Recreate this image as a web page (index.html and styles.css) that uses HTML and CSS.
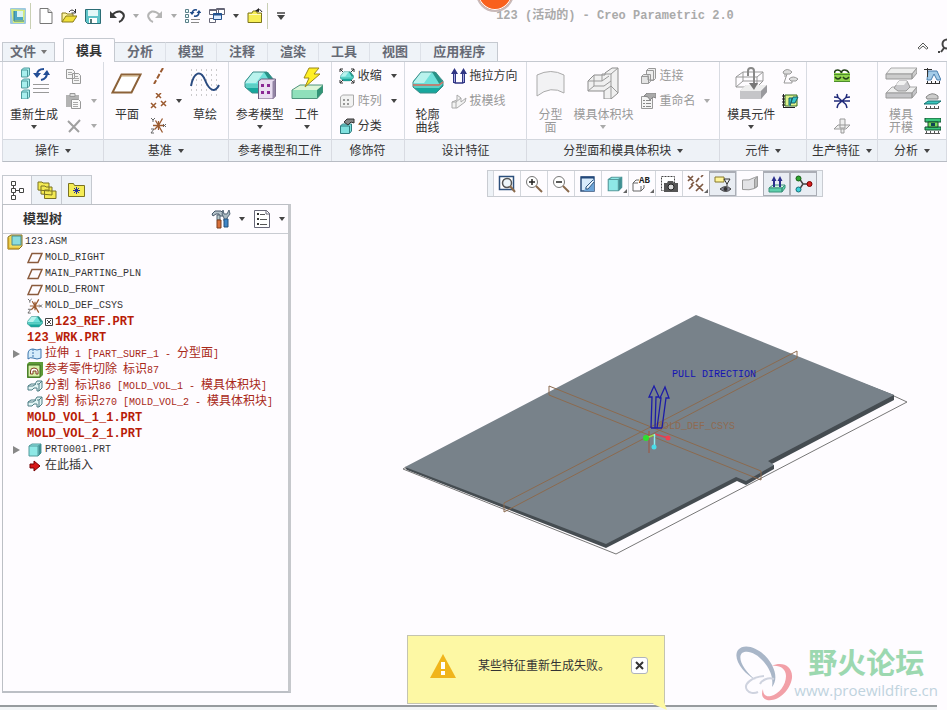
FILE: index.html
```html
<!DOCTYPE html>
<html lang="zh-CN">
  <head>
    <meta charset="UTF-8" />
    <meta name="viewport" content="width=device-width, initial-scale=1.0" />
    <title>123 (活动的) - Creo Parametric 2.0</title>
    <link rel="stylesheet" href="styles.css" />
  </head>

  <body>
    <svg class="sprite" aria-hidden="true">
      <symbol id="plane" viewBox="0 0 16 12">
        <path d="M5 1.500h10L11 10.500H1z" fill="none" stroke="#8a5a3c" stroke-width="1.500" />
      </symbol>
      <symbol id="csys" viewBox="0 0 17 17">
        <path d="M3 8.500h11M8.500 8.500l4-7M8.500 8.500l4 7M8.500 8.500l-4 4M8.500 8.500l-3-5M8.500 4v9" fill="none" stroke="#9a5a30" stroke-width="1.300" />
        <path d="M1 1l2 2 2-2M3 3v2M1 12h3l-3 4h3M13 7l3 3M16 7l-3 3" fill="none" stroke="#666" />
      </symbol>
      <symbol id="split" viewBox="0 0 16 12">
        <path d="M1 6l3-2h4l2-3h5v7l-3 3h-2V8H7L5 10H1zM1 6h5l3-2M10 4h2v7M12 4l3-3" fill="#e2f4f4" stroke="#4c7d84" />
      </symbol>
      <symbol id="mold" viewBox="0 0 32 24">
        <path d="M9 1h14l8 10-4 4H2L1 10z" fill="#6fe0da" />
        <path d="M9 1h11L12 12H1z" fill="#b9f3ee" />
        <path d="M20 1h4l7 10-3 3z" fill="#259487" />
        <path d="M1 13h26l4-3v5l-7 7H8l-7-6z" fill="#17a79d" />
        <path d="M1 13h26l4-3v3l-4 4H1z" fill="#5ccfc5" />
        <path d="M9 1h14l8 9v5l-7 7H8l-7-6v-5z" fill="none" stroke="#3d8c88" />
      </symbol>
      <symbol id="cube" viewBox="0 0 16 16">
        <path d="M2 4l3-2h9v9l-3 3H2z" fill="#8ee8e6" stroke="#559a9c" />
        <path d="M2 4h9v10M11 4l3-2" fill="none" stroke="#559a9c" />
        <path d="M11.500 4l2.500-2v9l-2.500 3z" fill="#3f8f92" />
      </symbol>
    </svg>

    <header class="titlebar">
      <div class="quick">
        <button class="icon-btn sep" aria-label="Creo">
          <svg width="16" height="16"><rect width="16" height="16" rx="1" fill="#9cc8e0" /><path d="M1 1l14 1-1 13H3z" fill="#d5ea7c" /><path d="M4 3h9v9H4z" fill="#4da6c4" /><path d="M7 3h6v6H7z" fill="#d9f3f3" /><path d="M4 3v10h10" fill="none" stroke="#2d7e96" /></svg>
        </button>
        <button class="icon-btn" aria-label="新建">
          <svg width="14" height="16"><path d="M1 .500h8l4 4v11H1z" fill="#fff" stroke="#777" /><path d="M9 .500v4h4" fill="#ddd" stroke="#777" /></svg>
        </button>
        <button class="icon-btn" aria-label="打开">
          <svg width="16" height="16"><path d="M1 14V5h4l1 1h6v3" fill="#fbf3a0" stroke="#8a7d1a" /><path d="M1 14l4-6h11l-4 6z" fill="#f0df3a" stroke="#8a7d1a" /><path d="M8 4q3-4 6 0M14.500 1v4h-4" fill="none" stroke="#333" /></svg>
        </button>
        <button class="icon-btn" aria-label="保存">
          <svg width="16" height="16"><path d="M.500 1.500h15v14h-13l-2-2z" fill="#5fc3c8" stroke="#2b6c75" /><path d="M3 2h10v6H3z" fill="#e3f8f8" /><path d="M4 10h8v5H4z" fill="#fff" /><path d="M5 11h2v4H5z" fill="#577" /></svg>
        </button>
        <button class="icon-btn" aria-label="撤消">
          <svg width="16" height="16"><path d="M3 7q4-4 8-3.500 5 2 3.500 6Q13 13 10 14" fill="none" stroke="#3a3a3a" stroke-width="2" /><path d="M1 3v7h7z" fill="#3a3a3a" /></svg>
        </button>
        <span class="caret dim"></span>
        <button class="icon-btn" aria-label="重做">
          <svg width="16" height="16"><path d="M13 7Q9 3 5 3.500 0 5.500 1.500 9.500 3 13 6 14" fill="none" stroke="#b5b5b5" stroke-width="2" /><path d="M15 3v7H8z" fill="#b5b5b5" /></svg>
        </button>
        <span class="caret dim"></span>
        <button class="icon-btn" aria-label="重新生成">
          <svg width="16" height="16"><path d="M.500 1.500h3v3h-3zM.500 6.500h3v3h-3zM.500 11.500h3v3h-3z" fill="#e8fbfb" stroke="#5a7f88" /><path d="M6 11.500h9M6 14.500h8" stroke="#888" /><path d="M7 5q1-4 5-3M14 5q-1 4-5 3" fill="none" stroke="#1f4a88" stroke-width="1.500" /><path d="M4.500 4h5L7 7zM11.500 5h5L14 2z" fill="#1f4a88" /></svg>
        </button>
        <button class="icon-btn" aria-label="窗口">
          <svg width="16" height="16"><path d="M.500 1.500h9v5h-9zM7.500.500h8v6h-8zM.500 10.500h6v4h-6z" fill="#fff" stroke="#667" /><path d="M4.500 5.500h8v6h-8z" fill="#dcecff" stroke="#23528f" /><path d="M4 6.500h9" stroke="#23528f" stroke-width="2" /><path d="M1 2.500h6M8 1.500h7" stroke="#667" /></svg>
        </button>
        <span class="caret"></span>
        <button class="icon-btn sep" aria-label="关闭">
          <svg width="16" height="16"><path d="M1 14.500V5h4l1-2h4v2h4.500v9.500z" fill="#f7ef55" stroke="#7c741d" /><path d="M2 6.500h12" stroke="#fffcc0" /><path d="M10 3q3-3 5 1" fill="none" stroke="#222" /><path d="M8 3l4-3v4z" fill="#222" /></svg>
        </button>
        <button class="icon-btn" aria-label="自定义">
          <svg width="10" height="8"><path d="M1 1h8" stroke="#444" stroke-width="1.500" /><path d="M1 3h8L5 8z" fill="#444" /></svg>
        </button>
      </div>
      <h1 class="title">123 (活动的) - Creo Parametric 2.0</h1>
      <span class="record"></span>
    </header>

    <nav class="tabs">
      <button class="tab file">文件<span class="caret"></span></button>
      <button class="tab active">模具</button>
      <button class="tab">分析</button>
      <button class="tab">模型</button>
      <button class="tab">注释</button>
      <button class="tab">渲染</button>
      <button class="tab">工具</button>
      <button class="tab">视图</button>
      <button class="tab last">应用程序</button>
      <div class="tab-tools">
        <button class="icon-btn" aria-label="最小化功能区">
          <svg width="12" height="8"><path d="M1 6l5-5 5 5-1.500 1L6 4 2.500 7z" fill="#fff" stroke="#555" /></svg>
        </button>
        <button class="icon-btn" aria-label="搜索">
          <svg width="9" height="16"><circle cx="9" cy="6" r="4.500" fill="none" stroke="#444" stroke-width="2" /><path d="M6 10l-3 4" stroke="#444" stroke-width="2" /><path d="M0 14h2" stroke="#444" stroke-width="2" /></svg>
        </button>
      </div>
    </nav>

    <div class="ribbon">
      <section class="group">
        <div class="tools">
          <button class="big">
            <svg width="32" height="32"><path d="M3.500 3l2-2h6v7l-2 2h-6zM3.500 14l2-2h6v7l-2 2h-6zM3.500 25l2-2h6v7l-2 2h-6z" fill="#a8efee" stroke="#4d9a9c" /><path d="M3.500 3h6v7M3.500 14h6v7M3.500 25h6v7" fill="none" stroke="#4d9a9c" /><path d="M15 17.500h16M15 21.500h16M15 25.500h16" stroke="#999" /><path d="M19 8q0-6 7-6M29 6q0 6-6 7" fill="none" stroke="#234e96" stroke-width="2" /><path d="M15 6h8l-4 5zM25 8h7l-3-5z" fill="#234e96" /></svg>
            <span>重新生成</span><span class="caret"></span>
          </button>
          <div class="stack">
            <button class="small" aria-label="复制" disabled><svg width="17" height="16"><path d="M1.500 1.500h6l2 2v7h-8zM7.500 5.500h6l2 2v8h-8z" fill="#f5f5f5" stroke="#999" /><path d="M3 4.500h4M3 6.500h4M9 8.500h4M9 10.500h5M9 12.500h5" stroke="#aaa" /></svg></button>
            <button class="small" aria-label="粘贴" disabled><svg width="17" height="16"><path d="M1 2h13v12H1z" fill="#b3b3b3" /><path d="M5 .500h5v3H5z" fill="#ddd" stroke="#999" /><path d="M6.500 6.500h7l2 2v7h-9z" fill="#fafafa" stroke="#999" /><path d="M8 9.500h5M8 11.500h5M8 13.500h5" stroke="#aaa" /></svg><span class="caret dim"></span></button>
            <button class="small" aria-label="删除" disabled><svg width="17" height="16"><path d="M3 3l11 11M15 2L4 14" fill="none" stroke="#a0a0a0" stroke-width="2" /></svg><span class="caret dim"></span></button>
          </div>
        </div>
        <h2>操作<span class="caret"></span></h2>
      </section>

      <section class="group">
        <div class="tools">
          <button class="big">
            <svg width="32" height="32"><path d="M10.500 7.500h19l-9 18h-19z" fill="#fff" stroke="#8c6239" stroke-width="2" /><path d="M10 9h17" stroke="#c5a36c" /></svg>
            <span>平面</span>
          </button>
          <div class="stack">
            <button class="small" aria-label="轴"><svg width="17" height="16"><path d="M13 0L4 16" stroke="#9a5a30" stroke-width="2" stroke-dasharray="5 2" /></svg></button>
            <button class="small" aria-label="点"><svg width="17" height="16"><path d="M6 0l5 5M11 0L6 5M1 10l5 5M6 10l-5 5M11 8l5 5M16 8l-5 5" stroke="#9a5a30" stroke-width="1.500" /></svg><span class="caret"></span></button>
            <button class="small" aria-label="坐标系"><svg width="17" height="17"><use href="#csys" /></svg></button>
          </div>
          <button class="big">
            <svg width="32" height="32"><path d="M2 3h28M2 8h28M2 13h28M2 18h28M2 23h28M2 28h28" stroke="#999" stroke-width="1" stroke-dasharray="1 4" /><path d="M2 19C5 4 12 3 16 13s10 14 14 5" fill="none" stroke="#294a80" stroke-width="2" /></svg>
            <span>草绘</span>
          </button>
        </div>
        <h2>基准<span class="caret"></span></h2>
      </section>

      <section class="group">
        <div class="tools">
          <button class="big">
            <svg width="32" height="32"><use href="#mold" y="4" width="32" height="24" /><path d="M14.500 14l3-2h14v17l-3 3h-14z" fill="#e9def1" stroke="#6d5d7c" /><path d="M28.500 14.500l3-2v17l-3 3z" fill="#9385a5" /><path d="M17 17h3v3h-3zM23 17h3v3h-3zM17 24h3v3h-3zM23 24h3v3h-3z" fill="#8a2894" /></svg>
            <span>参考模型</span><span class="caret"></span>
          </button>
          <button class="big">
            <svg width="32" height="32"><path d="M1 23l8-5h23l-4 5z" fill="#ddf5d8" /><path d="M1 23h25v9H1z" fill="#8fe0bb" /><path d="M26 23l6-5v7l-6 7z" fill="#329477" /><path d="M1 23l8-5h23v7l-6 6.500H1z" fill="none" stroke="#4e947c" /><path d="M18 1h10l-5 6h6L14 20l4-9h-5z" fill="#ffef24" stroke="#9c8819" /></svg>
            <span>工件</span><span class="caret"></span>
          </button>
        </div>
        <h2>参考模型和工件</h2>
      </section>

      <section class="group">
        <div class="tools">
          <div class="stack">
            <button class="small"><svg width="16" height="16"><use href="#mold" x="1" y="3" width="14" height="11" /><path d="M1 4V1h3M12 1h3v3M1 12v3h3M15 12v3h-3M1 1l3 3M15 1l-3 3M1 15l3-3M15 15l-3-3" fill="none" stroke="#333" /></svg><span>收缩</span><span class="caret"></span></button>
            <button class="small off"><svg width="16" height="16"><path d="M1.500 4l2-2h11v10l-2 2h-11z" fill="#f2f2f2" stroke="#aaa" /><path d="M4 6h2v2H4zM8 6h2v2H8zM4 10h2v2H4zM8 10h2v2H8z" fill="#999" /></svg><span>阵列</span><span class="caret"></span></button>
            <button class="small"><svg width="16" height="16"><path d="M1.500 8l2-2h9v7l-2 2.500h-9z" fill="#7fe0de" stroke="#2f7d80" /><path d="M1.500 8h9v7" fill="none" stroke="#2f7d80" /><path d="M5 4l3-3h7v4l-3-1-3 3z" fill="#888" stroke="#333" /></svg><span>分类</span></button>
          </div>
        </div>
        <h2>修饰符</h2>
      </section>

      <section class="group">
        <div class="tools">
          <button class="big">
            <svg width="32" height="32"><use href="#mold" y="4" width="32" height="24" /><path d="M1 18h26l4-3" fill="none" stroke="#d9695b" stroke-width="1.500" /></svg>
            <span>轮廓<br />曲线</span>
          </button>
          <div class="stack">
            <button class="small"><svg width="16" height="16"><path d="M3.500 15V5M12.500 15V5" stroke="#2f3483" stroke-width="3" /><path d="M3.500 15h9" stroke="#2f3483" stroke-width="1.500" /><path d="M0 6l3.500-6L7 6zM9 6l3.500-6L16 6z" fill="#2f3483" /><path d="M3.500 14V6M12.500 14V6" stroke="#a8a8dd" /></svg><span>拖拉方向</span></button>
            <button class="small off"><svg width="16" height="16"><path d="M1 9l5-2V2l4 3v4l5-4-1 4-8 6H1z" fill="#f3f3f3" stroke="#aaa" /><path d="M1 9h4v6M5 9l5-4" fill="none" stroke="#aaa" /></svg><span>拔模线</span></button>
          </div>
        </div>
        <h2>设计特征</h2>
      </section>

      <section class="group">
        <div class="tools">
          <button class="big off">
            <svg width="32" height="32"><path d="M3 8q14-7 27 0v18q-13-8-27 3z" fill="#f2f2f4" stroke="#aaa" /></svg>
            <span>分型<br />面</span>
          </button>
          <button class="big off">
            <svg width="32" height="32"><path d="M1 14l6-6h11V6l7-5h6v25l-7 6h-7v-8H1z" fill="#f0f0f0" stroke="#8c8c8c" /><path d="M1 14h14V7h9v25M24 7l7-6M15 14l7-5M7 8v11L1 24M7 19h10l7-5M17 24l7-5 7 7" fill="none" stroke="#999" /></svg>
            <span>模具体积块</span><span class="caret dim"></span>
          </button>
          <div class="stack">
            <button class="small off"><svg width="16" height="16"><path d="M6.500 2.500l2-2h7v10l-2 2h-7z" fill="#eee" stroke="#999" /><path d="M1.500 8.500l2-2h7v7l-2 2h-7z" fill="#e4e4e4" stroke="#999" /><path d="M6.500 2.500h7v10M1.500 8.500h7v7M8 6v6h5" fill="none" stroke="#999" /></svg><span>连接</span></button>
            <button class="small off"><svg width="16" height="16"><path d="M1.500 3.500h11v12h-11z" fill="#f4f4f4" stroke="#999" /><path d="M3 7.500h2M6 7.500h5M3 10.500h2M6 10.500h5M3 13.500h2M6 13.500h5" stroke="#888" /><path d="M4 3l3-3h9v5l-3-1-3 3-2-3z" fill="#aaa" stroke="#888" /></svg><span>重命名</span><span class="caret dim"></span></button>
          </div>
        </div>
        <h2>分型面和模具体积块<span class="caret"></span></h2>
      </section>

      <section class="group">
        <div class="tools">
          <button class="big">
            <svg width="32" height="32"><path d="M1 10l7-5h20v9l-6 6H1zM1 10h21v10M22 10l6-5M8 5v9h20M8 14l-7 6" fill="none" stroke="#999" /><path d="M5 24l6-6h21v7l-6 7H5z" fill="#c5c5c8" /><path d="M5 24l6-6h21l-6 6z" fill="#eee" /><path d="M26 24l6-6v7l-6 7z" fill="#9a9a9e" /><path d="M13 9V4q0-3 3-3t3 3v13" fill="none" stroke="#888" stroke-width="2" /><path d="M14 16h9l-4 7z" fill="#777" /></svg>
            <span>模具元件</span><span class="caret"></span>
          </button>
          <div class="stack">
            <button class="small" aria-label="创建浇口" disabled><svg width="17" height="16"><path d="M1 4q4-5 9 0l-2 2H2zM7 11q4-4 9 0l-2 2H9z" fill="#ddd" stroke="#999" /><path d="M5 6l-3 9h8v-2M3 6v3" fill="none" stroke="#999" /></svg></button>
            <button class="small" aria-label="修剪到几何"><svg width="17" height="16"><path d="M3 2h12v11H3z" fill="#dff28d" stroke="#33691e" /><path d="M7 12V5h3l-2 8M9 10l2-6h5l-3 6z" fill="#37c6c9" stroke="#145c68" /><path d="M1.500 1v14M0 3h3M0 6h3M0 9h3M0 12h3M1 14.500h12" stroke="#222" /></svg></button>
          </div>
        </div>
        <h2>元件<span class="caret"></span></h2>
      </section>

      <section class="group">
        <div class="tools center">
          <div class="stack">
            <button class="small" aria-label="水线"><svg width="16" height="16"><path d="M0 5h16v9H0z" fill="#8fd34d" /><path d="M.500 5q0-3 3-3t4 3q0-3 3-3t4.500 3M1 9q3 4 6 0M9 9q3 4 6 0" fill="none" stroke="#23401a" stroke-width="1.500" /><path d="M0 6.500h16M0 13.500h16" stroke="#4c8d2c" /><path d="M2 5l2-2M9 5l2-2" stroke="#fff" /></svg></button>
            <button class="small" aria-label="流道"><svg width="16" height="16"><path d="M0 8h16M4 4.500l8 7M12 4.500l-8 7M4 4.500L3 1M4 4.500L0 4M12 4.500L13 1M12 4.500l4-.500M4 11.500L3 15M12 11.500l1 3.500" fill="none" stroke="#202a7a" stroke-width="1.500" /></svg></button>
            <button class="small" aria-label="顶杆孔" disabled><svg width="16" height="16"><path d="M0 11l4-4h12l-4 4zM6 1h5v9H6zM7 11v4h3v-4" fill="#eee" stroke="#999" /></svg></button>
          </div>
        </div>
        <h2>生产特征<span class="caret"></span></h2>
      </section>

      <section class="group">
        <div class="tools">
          <button class="big off">
            <svg width="32" height="32"><path d="M1 7l5-6h26l-5 6z" fill="#eee" stroke="#aaa" /><path d="M1 7h26v5H1zM27 7l5-6v5l-5 6z" fill="#ccc" stroke="#999" /><path d="M1 26l6-6h25l-5 6z" fill="#eee" stroke="#aaa" /><path d="M1 26h26v5H1zM27 26l5-6v5l-5 6z" fill="#c5c5c8" stroke="#999" /><path d="M9 21l5-7h8l3 6-4 4h-8z" fill="#c9c9cc" stroke="#999" /><path d="M14 14h8l-3 4h-8z" fill="#f2f2f2" /></svg>
            <span>模具<br />开模</span>
          </button>
          <div class="stack">
            <button class="small" aria-label="拔模检测"><svg width="17" height="16"><path d="M4 3h9l4 9h-4l-3-6-3 6H3z" fill="#a4cbe8" stroke="#4a7fae" /><path d="M0 1.500h8M3.500 0v9M2 15.500h14M3.500 13v3M7.500 13v3M11.500 13v3M15.500 13v3" stroke="#333" /></svg></button>
            <button class="small" aria-label="投影面积"><svg width="17" height="16"><path d="M2 4q6-6 12-1v3H3z" fill="#ccc" stroke="#888" /><path d="M0 11l4-3h13l-4 3z" fill="#39c6bd" stroke="#176f6e" /><path d="M1 15.500h14M2.500 13v3M6.500 13v3M10.500 13v3M14.500 13v3" stroke="#555" /></svg></button>
            <button class="small" aria-label="厚度"><svg width="17" height="16"><path d="M1 0h16v4H1zM1 9h16v3H1z" fill="#39c67b" stroke="#124c31" /><path d="M4 4h10v5H4z" fill="#77dd58" stroke="#124c31" /><path d="M7 5h4v3H7z" fill="#145" /><path d="M1 15.500h15M2.500 13v3M6.500 13v3M10.500 13v3M14.500 13v3" stroke="#555" /></svg></button>
          </div>
        </div>
        <h2>分析<span class="caret"></span></h2>
      </section>
    </div>

    <main class="work">
      <aside class="side">
        <div class="side-tabs">
          <button class="side-tab active" aria-label="模型树"><svg width="16" height="20"><path d="M2.500 1.500h4v4h-4zM2.500 8.500h4v4h-4zM2.500 15.500h4v4h-4zM10.500 8.500h4v4h-4z" fill="#fff" stroke="#444" /><path d="M4.500 6v2M4.500 13v2M7 10.500h3" stroke="#444" /></svg></button>
          <button class="side-tab" aria-label="文件夹浏览器"><svg width="20" height="20"><path d="M1 10V2h4l1 1h6v8zM4 14V6h4l1 1h6v8zM7.500 18.500V10h4l1 1h6.500v7.500z" fill="#f3ea52" stroke="#7a7222" /></svg></button>
          <button class="side-tab" aria-label="收藏夹"><svg width="20" height="20"><path d="M1.500 16.500V3.500h5l1 2h10v11z" fill="#f5ec55" stroke="#7a7222" /><path d="M9.500 7v7M6 10.500h7M7 8l5 5M12 8l-5 5" stroke="#24309a" /></svg></button>
        </div>
        <div class="panel">
          <div class="panel-head">
            <h3>模型树</h3>
            <button class="icon-btn" aria-label="设置"><svg width="20" height="20"><path d="M1 5l3-3h6l2 2v3H8V5H5L2 7z" fill="#b5c3ca" stroke="#456" /><path d="M6 6h3v5H6z" fill="#bcc" stroke="#567" /><path d="M6 11h4v8H6z" fill="#d8703a" stroke="#7b3c1c" /><path d="M12 1l1 4h3l2-4 1 4-3 4v3h-3V9l-2-4z" fill="#a9b8c0" stroke="#567" /><path d="M13 10h4v8h-4z" fill="#3d85c6" stroke="#234e7b" /></svg></button>
            <span class="caret"></span>
            <button class="icon-btn list-icon" aria-label="显示"><svg width="18" height="20"><path d="M1.500 1.500h12l3 3v14h-15z" fill="#fff" stroke="#667" /><path d="M13 1v4h4" fill="none" stroke="#667" /><path d="M4 4h2v2H4zM4 9h2v2H4zM4 14h2v2H4z" fill="#333" /><path d="M7 5.500h5M7 10.500h7M7 15.500h7" stroke="#555" /></svg></button>
            <span class="caret"></span>
          </div>
          <ul class="tree">
            <li class="root"><svg width="16" height="16"><path d="M1 3l3-2h11v11l-3 3H1z" fill="#f3dc5c" stroke="#857127" /><path d="M5 2h9v9H5z" fill="#8bdcdd" stroke="#4b8b90" /><path d="M1.500 4v10.500H12" fill="none" stroke="#c49a24" stroke-width="1.500" /></svg>123.ASM</li>
            <li><svg width="16" height="12"><use href="#plane" /></svg>MOLD_RIGHT</li>
            <li><svg width="16" height="12"><use href="#plane" /></svg>MAIN_PARTING_PLN</li>
            <li><svg width="16" height="12"><use href="#plane" /></svg>MOLD_FRONT</li>
            <li><svg width="16" height="16"><use href="#csys" /></svg>MOLD_DEF_CSYS</li>
            <li class="bad part"><svg width="16" height="12"><use href="#mold" /></svg><svg class="mark" width="8" height="8"><path d="M.500.500h7v7h-7zM2 2l4 4M6 2L2 6" fill="none" stroke="#444" /></svg>123_REF.PRT</li>
            <li class="bad part">123_WRK.PRT</li>
            <li class="bad"><span class="twist"></span><svg width="16" height="14"><path d="M1 12V7q0-5 5-5 4 2 8 0v9q-4 2-8 0-3-1-5 1z" fill="#d5ecfb" stroke="#3b75ac" /><path d="M6 2v9" stroke="#3b75ac" stroke-dasharray="2 1" /></svg><span><b>拉伸</b> 1 [PART_SURF_1 - <b>分型面</b>]</span></li>
            <li class="bad"><svg width="16" height="16"><path d="M0 2l2-2h14v13l-3 3H0z" fill="#5e9b38" /><path d="M1 3h12v12H1z" fill="#d6f1a9" stroke="#38681d" /><path d="M3.500 12V9q0-3 3.500-3t4 3v3H9V9H6v3z" fill="#fff" stroke="#823d22" /></svg><span><b>参考零件切除</b> <b>标识</b>87</span></li>
            <li class="bad"><svg width="16" height="12"><use href="#split" /></svg><span><b>分割</b> <b>标识</b>86 [MOLD_VOL_1 - <b>模具体积块</b>]</span></li>
            <li class="bad"><svg width="16" height="12"><use href="#split" /></svg><span><b>分割</b> <b>标识</b>270 [MOLD_VOL_2 - <b>模具体积块</b>]</span></li>
            <li class="bad part">MOLD_VOL_1_1.PRT</li>
            <li class="bad part">MOLD_VOL_2_1.PRT</li>
            <li><span class="twist"></span><svg width="16" height="16"><use href="#cube" /></svg>PRT0001.PRT</li>
            <li><svg width="16" height="12"><path d="M3 4h4V1l6 5-6 5V8H3z" fill="#d81818" stroke="#700" /></svg><b>在此插入</b></li>
          </ul>
        </div>
      </aside>

      <section class="view">
        <div class="view-bar">
          <button aria-label="重新调整"><svg width="18" height="18"><path d="M1.500 1.500h14v13h-14z" fill="#fff" stroke="#2d4f7c" stroke-width="1.500" /><circle cx="9" cy="8" r="4.500" fill="#eef6fa" stroke="#555" stroke-width="1.500" /><path d="M12 11l5 6" stroke="#8a6a4c" stroke-width="2" /></svg></button>
          <button aria-label="放大"><svg width="18" height="18"><circle cx="7" cy="7" r="5.500" fill="#fff" stroke="#777" /><path d="M4 7h6M7 4v6" stroke="#222" stroke-width="1.500" /><path d="M11 11l6 6" stroke="#8a6a4c" stroke-width="2" /></svg></button>
          <button aria-label="缩小"><svg width="18" height="18"><circle cx="7" cy="7" r="5.500" fill="#fff" stroke="#777" /><path d="M4 7h6" stroke="#222" stroke-width="1.500" /><path d="M11 11l6 6" stroke="#8a6a4c" stroke-width="2" /></svg></button>
          <button aria-label="重画"><svg width="18" height="18"><path d="M2 2h13v14H2z" fill="#d8ebfb" stroke="#2d4f7c" stroke-width="1.500" /><path d="M2 2.500h13" stroke="#23477b" stroke-width="2" /><path d="M15 4L7 12l-2 4h10z" fill="#6ca4d8" /><path d="M14 5l-7 7v2h2l6-7" fill="#eaf5ff" stroke="#33597f" /></svg></button>
          <button class="more" aria-label="显示样式"><svg width="18" height="18"><use href="#cube" width="18" height="18" /></svg></button>
          <button class="more" aria-label="已命名视图"><svg width="20" height="18"><path d="M1 8l3-3h3M1 8v8h8v-5M1 8h5M9 16l3-3v-3" fill="none" stroke="#666" /><text x="7" y="8" class="ab">AB</text></svg></button>
          <button aria-label="视图管理器"><svg width="18" height="18"><path d="M1.500 1.500h13v14h-13z" fill="#fff" stroke="#444" stroke-dasharray="2 1" /><path d="M4 8h3l1-2h5l1 2h4v9H4z" fill="#555" /><circle cx="11" cy="12" r="3" fill="#ddd" stroke="#222" /></svg></button>
          <button class="more" aria-label="基准显示"><svg width="18" height="18"><path d="M1 1l5 5M6 1L1 6M2 14l4-4M9 7l3-4M14 2l2-2M9 9l7 7M16 9l-7 7M4 10l3-3" fill="none" stroke="#7c5742" stroke-width="1.700" /></svg></button>
          <button class="on" aria-label="注释显示"><svg width="18" height="18"><path d="M1 2h9v5H1z" fill="#fff59a" stroke="#86782a" /><path d="M10 4h6l-3 5zM13 8v3" fill="none" stroke="#333" /><path d="M6 14q6-5 11 0-5 5-11 0z" fill="#889" stroke="#444" /><circle cx="11.500" cy="14" r="2" fill="#333" /></svg></button>
          <button aria-label="模具显示"><svg width="18" height="18"><path d="M1.500 5q7 1 12-2.500l3-1v10l-3 2q-5 2-12 1z" fill="#e3e3e6" stroke="#999" /><path d="M13.500 4v9l3-2V2z" fill="#bbb" stroke="#999" /></svg></button>
          <button class="on" aria-label="拖拉方向显示"><svg width="18" height="18"><path d="M1 13l4-3h12l-3 3z" fill="#d8f8e6" stroke="#3a927a" /><path d="M1 13h13v4H1zM14 13l3-3v3l-3 4z" fill="#5fd0ac" stroke="#3a927a" /><path d="M6 12V3M12 12V3" stroke="#2a2f8c" stroke-width="2" /><path d="M3.500 6L6 1l2.500 5zM9.500 6L12 1l2.500 5z" fill="#2a2f8c" /></svg></button>
          <button class="on" aria-label="旋转中心"><svg width="18" height="18"><path d="M4 3l4 6-4 6M8 9h7" fill="none" stroke="#444" stroke-width="1.500" /><circle cx="3.500" cy="3.500" r="2.500" fill="#2ea52e" stroke="#145c14" /><circle cx="3.500" cy="14.500" r="2.500" fill="#3fd0d8" stroke="#176f77" /><circle cx="14.500" cy="9" r="2.500" fill="#d82020" stroke="#700" /></svg></button>
        </div>

        <svg class="scene" viewBox="292 197 655 508">
          <path d="M405 468l291-149 198 76v5L770 465l4 0v4l-28 16-9-4-131 67-199-78z" fill="#454c51" />
          <path d="M405 467L696 315l198 80-126 66 6 4-28 16-10-4-130 67z" fill="#78828a" />
          <path d="M406 467l-3 2 213 85 291-152-13-6" fill="none" stroke="#777" />
          <g fill="none" stroke="#8c6a4e">
            <path d="M549 395v-9l212 85v9zM504 503l293-152v7L504 512z" />
            <path d="M649 431v22" stroke="#a0543c" />
          </g>
          <text x="657" y="429" class="csys-label">MOLD_DEF_CSYS</text>
          <path d="M651 428l1-31h-3l5-11 5 11h-3l-1 31M657 428l4-30h-1l5-11 4 11h-3l-4 30M651 428h11" fill="none" stroke="#1c1ca8" stroke-width="1.300" />
          <text x="672" y="377" class="pull">PULL DIRECTION</text>
          <path d="M654 435l-8 3" stroke="#9be04c" stroke-width="1.500" />
          <path d="M655 434l13 4" stroke="#e04050" stroke-width="1.500" />
          <path d="M654.500 434v12" stroke="#8ef0f0" stroke-width="1.500" />
          <circle cx="646" cy="438" r="3" fill="#2ee02e" />
          <circle cx="668" cy="438" r="2.500" fill="#f04050" />
          <circle cx="654" cy="447" r="2.500" fill="#48dcea" />
        </svg>

        <div class="notice" role="alert">
          <svg width="28" height="26"><path d="M14 1l13 24H1z" fill="#f0b51c" /><path d="M14 9v7M14 18v4" stroke="#fff" stroke-width="4" /></svg>
          <p>某些特征重新生成失败。</p>
          <button class="close" aria-label="关闭"><svg width="9" height="9"><path d="M1 1l7 7M8 1L1 8" stroke="#333" stroke-width="2" /></svg></button>
          <svg class="tail" width="16" height="18"><path d="M0 12l8-10 6 16z" fill="#fdf8a4" /></svg>
        </div>

        <div class="brand">
          <svg width="58" height="56"><g fill="none"><path fill="#a9b6c8" fill-rule="evenodd" d="M2 4C10-5 29 5 36 19c5 10 4 17 0 22 1-7 0-13-5-21C23 8 12 3 6 7c-5 5 2 18 14 27C8 28-4 13 2 4z" /><path fill="#f2a0a8" d="M36 20c10-5 21 0 20 12-2 13-14 24-25 22-5-1-6-6-4-11 0 6 3 8 8 7 8-2 15-11 15-20 0-7-6-11-14-10z" /><path d="M28 30c-12 1-21 8-17 14 2 3 7 4 11 2M38 33c-6-2-12 1-14 5" stroke="#cfd3df" stroke-width="2" /></g></svg>
          <div>
            <strong>野火论坛</strong>
            <span>www.proewildfire.cn</span>
          </div>
        </div>
      </section>
    </main>
    <footer class="status"></footer>
  </body>
</html>
```

FILE: styles.css
```css
* {
  box-sizing: border-box;
}
body {
  margin: 0;
  min-height: 100vh;
  display: flex;
  flex-direction: column;
  overflow: hidden;
  background: #fefcff;
  color: #333;
  font: 12px/12px "Liberation Sans", "Noto Sans CJK SC", sans-serif;
}
h1,
h2,
h3,
p,
ul {
  margin: 0;
  padding: 0;
}
svg {
  display: block;
  flex: none;
}
.sprite {
  position: absolute;
  width: 0;
  height: 0;
}
button {
  margin: 0;
  padding: 0;
  border: 0;
  background: none;
  color: inherit;
  font: inherit;
  white-space: nowrap;
}
.caret {
  flex: none;
  width: 6px;
  border: 3px solid transparent;
  border-top: 4px solid #444;
  border-bottom: 0;
}
.caret.dim {
  border-top-color: #aaa;
}

/* title bar */
.titlebar {
  position: relative;
  display: flex;
  align-items: center;
  height: 38px;
  padding: 0 0 6px 10px;
}
.quick {
  display: flex;
  align-items: center;
  gap: 8px;
}
.icon-btn.sep {
  padding-right: 4px;
  border-right: 1px solid #c9cfb4;
}
.quick .sep {
  height: 26px;
}
.title {
  position: absolute;
  left: 0;
  right: 0;
  padding-left: 283px;
  text-align: center;
  color: #aaa;
  font: bold 12px/16px "Liberation Mono", "Noto Sans CJK SC", monospace;
  pointer-events: none;
}
.record {
  position: absolute;
  top: -26px;
  left: 52%;
  width: 38px;
  height: 38px;
  margin-left: -16px;
  border: 2px solid #c9b9b9;
  border-radius: 50%;
  background: #f9601c;
  box-shadow: inset 0 0 0 1px #fff;
}

/* ribbon tabs */
.tabs {
  display: flex;
  align-items: flex-end;
  padding-left: 2px;
  border-bottom: 1px solid #c5c9d0;
}
.tab {
  height: 19px;
  padding: 0 12px;
  border-top: 1px solid #c5c9d0;
  border-right: 1px solid #dde1e8;
  background: #eff3f8;
  color: #666a75;
  font-size: 13px;
  font-weight: bold;
}
.tab.file {
  display: flex;
  align-items: center;
  gap: 5px;
  margin-right: 8px;
  padding: 0 7px;
  border: 1px solid #c5c9d0;
  border-bottom: 0;
}
.tab.file .caret {
  border-top-color: #777;
}
.tab.active {
  height: 24px;
  margin-bottom: -1px;
  border: 1px solid #c5c9d0;
  border-bottom: 0;
  border-radius: 2px 2px 0 0;
  background: #fefcff;
  color: #333;
}
.tab.last {
  border-right-color: #c5c9d0;
}
.tab-tools {
  display: flex;
  align-items: center;
  gap: 9px;
  margin-left: auto;
  padding-bottom: 7px;
}

/* ribbon groups share the row in proportion */
.ribbon {
  display: grid;
  grid-template-columns: 101fr 125fr 103fr 73fr 123fr 193fr 87fr 71fr 69fr;
  margin-left: 2px;
  border-left: 1px solid #d8dbe2;
  border-bottom: 1px solid #b8bcc4;
}
.group {
  min-width: 0;
  border-right: 1px solid #d8dbe2;
}
.tools {
  display: flex;
  gap: 7px;
  height: 77px;
  padding: 1px 0 1px 7px;
}
.tools.center {
  justify-content: center;
  padding-left: 0;
}
.group h2 {
  display: flex;
  align-items: center;
  justify-content: center;
  gap: 6px;
  height: 22px;
  border-top: 1px solid #d3d7de;
  background: #eef2f7;
  font-size: 12px;
  font-weight: normal;
  white-space: nowrap;
}
.big {
  display: flex;
  flex-direction: column;
  align-items: center;
  padding-top: 4px;
  line-height: 13px;
}
.big svg {
  margin-bottom: 10px;
}
.big .caret {
  margin-top: 3px;
}
.stack {
  display: flex;
  flex-direction: column;
}
.small {
  display: flex;
  align-items: center;
  gap: 3px;
  height: 25px;
}
.small .caret {
  margin-left: 6px;
}
.off {
  color: #999;
}

/* model tree */
.work {
  flex: 1;
  display: flex;
  gap: 1px;
}
.side {
  display: flex;
  flex-direction: column;
  flex: 0 0 289px;
  margin: 13px 0 12px 2px;
}
.side-tabs {
  display: flex;
}
.side-tab {
  display: flex;
  align-items: center;
  justify-content: center;
  width: 30px;
  height: 29px;
  border: 1px solid #c5c9d0;
  border-width: 1px 1px 0 0;
  background: #eef2f7;
}
.side-tab.active {
  border-left-width: 1px;
  margin-bottom: -1px;
  background: #fefcff;
  z-index: 1;
}
.panel {
  flex: 1;
  border: 1px solid #bcbfc5;
  border-right: 3px solid #c6c8cc;
  border-bottom-width: 2px;
}
.panel-head {
  display: flex;
  align-items: center;
  gap: 8px;
  height: 29px;
  padding: 0 3px 0 20px;
  border-bottom: 1px solid #c9ccd2;
}
.panel-head h3 {
  margin-right: auto;
  font-size: 13px;
}
.tree {
  list-style: none;
  font: 10px/16px "Liberation Mono", "Noto Sans CJK SC", monospace;
}
.tree li {
  position: relative;
  display: flex;
  align-items: center;
  gap: 2px;
  height: 16px;
  padding-left: 24px;
  white-space: nowrap;
}
.tree .root {
  padding-left: 4px;
}
.tree b {
  font-size: 12px;
  font-weight: normal;
}
.tree .bad {
  color: #a82818;
}
.tree .part {
  font-size: 12px;
  font-weight: bold;
  color: #b81c08;
}
.twist {
  position: absolute;
  left: 10px;
  border: 4px solid transparent;
  border-left: 7px solid #888;
  border-right: 0;
}

/* graphics area */
.view {
  position: relative;
  flex: 1;
  min-width: 0;
}
.view-bar {
  display: flex;
  width: max-content;
  margin: 8px 0 0 195px;
  padding: 0 5px;
  border: 1px solid #c9ccd2;
  background: #eef2f7;
}
.view-bar button {
  position: relative;
  display: flex;
  align-items: center;
  justify-content: center;
  width: 27px;
  height: 25px;
  border-left: 1px solid #d3d6dc;
  background: #fefcff;
}
.view-bar .on {
  border: 1px solid #aaadb5;
  border-top-width: 2px;
  background: #e9edf3;
}
.view-bar .more::after {
  content: "";
  position: absolute;
  right: 1px;
  bottom: 3px;
  border: 2px solid #666;
  border-top-color: transparent;
  border-left-color: transparent;
}
.ab {
  font: bold 9px "Liberation Mono", monospace;
  fill: #222;
}
.scene {
  width: 100%;
  height: auto;
}
.pull,
.csys-label {
  font: 10px "Liberation Mono", monospace;
  fill: #1414b4;
}
.csys-label {
  fill: #8f6a50;
}
.notice {
  position: absolute;
  left: 115px;
  bottom: 1px;
  display: flex;
  align-items: center;
  width: 258px;
  height: 69px;
  padding: 0 16px 8px 21px;
  border: 1px solid #c4c4b0;
  background: #fdf8a4;
}
.notice p {
  margin: 0 auto 0 21px;
}
.close {
  display: flex;
  align-items: center;
  justify-content: center;
  width: 17px;
  height: 17px;
  border: 1px solid #b0b4bc;
  border-radius: 3px;
  background: #fff;
}
.tail {
  position: absolute;
  right: -5px;
  bottom: -7px;
  z-index: 1;
}
.brand {
  position: absolute;
  right: 9px;
  bottom: 3px;
  display: flex;
  align-items: center;
}
.brand div {
  display: flex;
  flex-direction: column;
  align-items: center;
}
.brand strong {
  color: #9cd8b0;
  font-size: 29px;
  line-height: 32px;
}
.brand span {
  color: #c0d3de;
  font: 15px/20px "Open Sans", sans-serif;
}
.status {
  height: 5px;
  margin-right: 10px;
  border-top: 2px solid #979b9e;
  background: #f2f4f6;
}
```
